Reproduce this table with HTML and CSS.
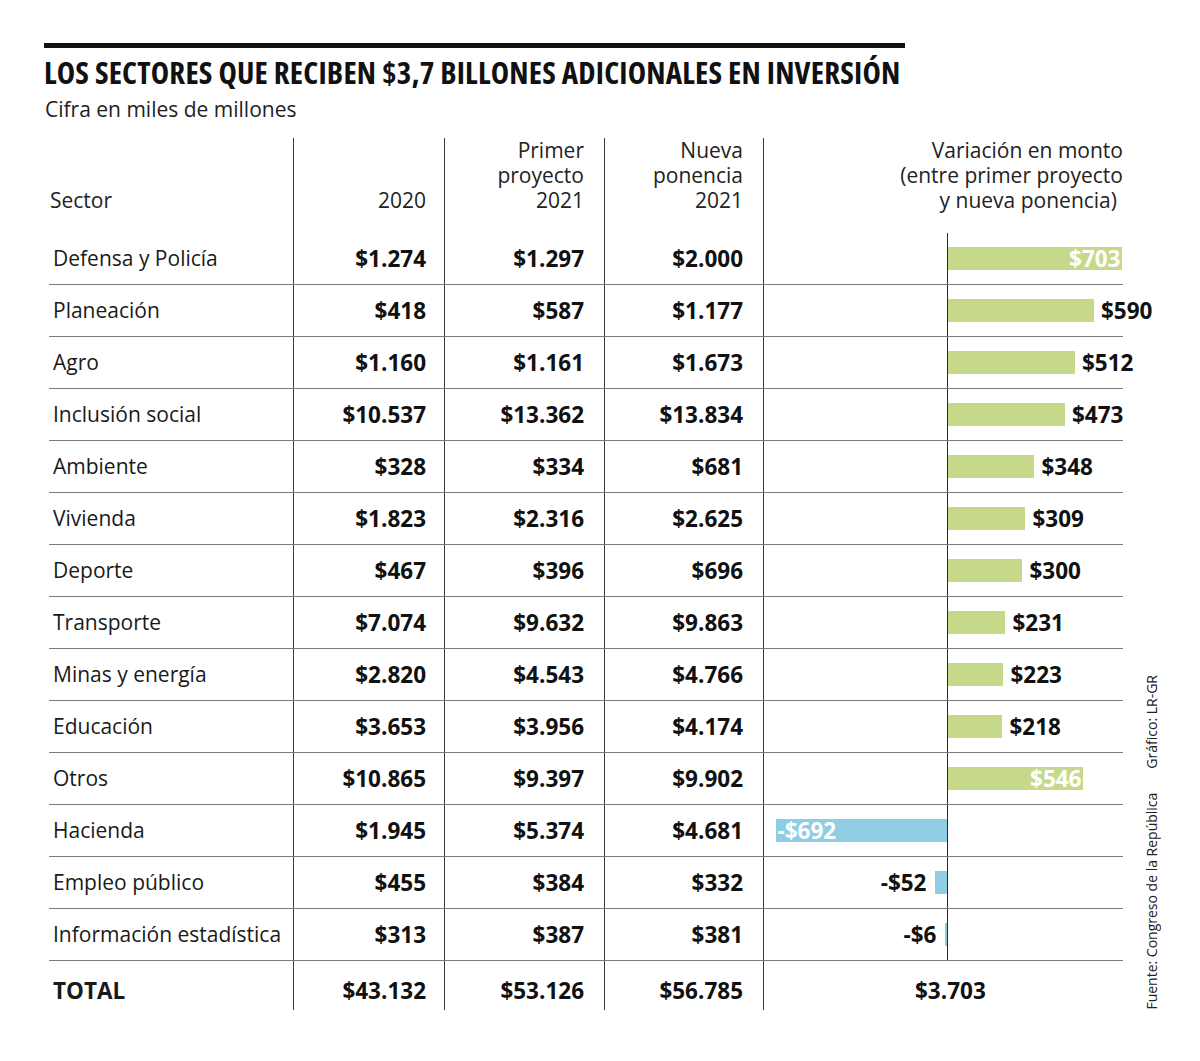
FILE: index.html
```html
<!DOCTYPE html>
<html lang="es">
<head>
<meta charset="utf-8">
<title>Los sectores que reciben $3,7 billones adicionales en inversión</title>
<link rel="stylesheet" href="styles.css">
</head>
<body>
<div class="page">
  <div class="rule"></div>
  <h1 class="title">LOS SECTORES QUE RECIBEN $3,7 BILLONES ADICIONALES EN INVERSIÓN</h1>
  <p class="subtitle">Cifra en miles de millones</p>

  <div class="main">
    <div class="table">
      <div class="row head">
        <div class="cell sector">Sector</div>
        <div class="cell num c2">2020</div>
        <div class="cell num c3">Primer<br>proyecto<br>2021</div>
        <div class="cell num c4">Nueva<br>ponencia<br>2021</div>
        <div class="cell chart-head">Variación en monto<br>(entre primer proyecto<br><span class="last">y nueva ponencia)</span></div>
      </div>

      <div class="row body">
        <div class="cell sector">Defensa y Policía</div>
        <div class="cell num c2">$1.274</div>
        <div class="cell num c3">$1.297</div>
        <div class="cell num c4">$2.000</div>
        <div class="cell chart"><div class="neg"></div><div class="pos"><div class="bar green" style="width:174px"><span class="in">$703</span></div></div></div>
      </div>
      <div class="row body">
        <div class="cell sector">Planeación</div>
        <div class="cell num c2">$418</div>
        <div class="cell num c3">$587</div>
        <div class="cell num c4">$1.177</div>
        <div class="cell chart"><div class="neg"></div><div class="pos"><div class="bar green" style="width:146px"></div><span class="out">$590</span></div></div>
      </div>
      <div class="row body">
        <div class="cell sector">Agro</div>
        <div class="cell num c2">$1.160</div>
        <div class="cell num c3">$1.161</div>
        <div class="cell num c4">$1.673</div>
        <div class="cell chart"><div class="neg"></div><div class="pos"><div class="bar green" style="width:127px"></div><span class="out">$512</span></div></div>
      </div>
      <div class="row body">
        <div class="cell sector">Inclusión social</div>
        <div class="cell num c2">$10.537</div>
        <div class="cell num c3">$13.362</div>
        <div class="cell num c4">$13.834</div>
        <div class="cell chart"><div class="neg"></div><div class="pos"><div class="bar green" style="width:117px"></div><span class="out">$473</span></div></div>
      </div>
      <div class="row body">
        <div class="cell sector">Ambiente</div>
        <div class="cell num c2">$328</div>
        <div class="cell num c3">$334</div>
        <div class="cell num c4">$681</div>
        <div class="cell chart"><div class="neg"></div><div class="pos"><div class="bar green" style="width:86px"></div><span class="out">$348</span></div></div>
      </div>
      <div class="row body">
        <div class="cell sector">Vivienda</div>
        <div class="cell num c2">$1.823</div>
        <div class="cell num c3">$2.316</div>
        <div class="cell num c4">$2.625</div>
        <div class="cell chart"><div class="neg"></div><div class="pos"><div class="bar green" style="width:77px"></div><span class="out">$309</span></div></div>
      </div>
      <div class="row body">
        <div class="cell sector">Deporte</div>
        <div class="cell num c2">$467</div>
        <div class="cell num c3">$396</div>
        <div class="cell num c4">$696</div>
        <div class="cell chart"><div class="neg"></div><div class="pos"><div class="bar green" style="width:74px"></div><span class="out">$300</span></div></div>
      </div>
      <div class="row body">
        <div class="cell sector">Transporte</div>
        <div class="cell num c2">$7.074</div>
        <div class="cell num c3">$9.632</div>
        <div class="cell num c4">$9.863</div>
        <div class="cell chart"><div class="neg"></div><div class="pos"><div class="bar green" style="width:57px"></div><span class="out">$231</span></div></div>
      </div>
      <div class="row body">
        <div class="cell sector">Minas y energía</div>
        <div class="cell num c2">$2.820</div>
        <div class="cell num c3">$4.543</div>
        <div class="cell num c4">$4.766</div>
        <div class="cell chart"><div class="neg"></div><div class="pos"><div class="bar green" style="width:55px"></div><span class="out">$223</span></div></div>
      </div>
      <div class="row body">
        <div class="cell sector">Educación</div>
        <div class="cell num c2">$3.653</div>
        <div class="cell num c3">$3.956</div>
        <div class="cell num c4">$4.174</div>
        <div class="cell chart"><div class="neg"></div><div class="pos"><div class="bar green" style="width:54px"></div><span class="out">$218</span></div></div>
      </div>
      <div class="row body">
        <div class="cell sector">Otros</div>
        <div class="cell num c2">$10.865</div>
        <div class="cell num c3">$9.397</div>
        <div class="cell num c4">$9.902</div>
        <div class="cell chart"><div class="neg"></div><div class="pos"><div class="bar green" style="width:135px"><span class="in">$546</span></div></div></div>
      </div>
      <div class="row body">
        <div class="cell sector">Hacienda</div>
        <div class="cell num c2">$1.945</div>
        <div class="cell num c3">$5.374</div>
        <div class="cell num c4">$4.681</div>
        <div class="cell chart"><div class="neg"><div class="bar blue" style="width:171px"><span class="in-left">-$692</span></div></div><div class="pos"></div></div>
      </div>
      <div class="row body">
        <div class="cell sector">Empleo público</div>
        <div class="cell num c2">$455</div>
        <div class="cell num c3">$384</div>
        <div class="cell num c4">$332</div>
        <div class="cell chart"><div class="neg"><span class="out-neg">-$52</span><div class="bar blue" style="width:12px"></div></div><div class="pos"></div></div>
      </div>
      <div class="row body">
        <div class="cell sector">Información estadística</div>
        <div class="cell num c2">$313</div>
        <div class="cell num c3">$387</div>
        <div class="cell num c4">$381</div>
        <div class="cell chart"><div class="neg"><span class="out-neg">-$6</span><div class="bar blue" style="width:2px"></div></div><div class="pos"></div></div>
      </div>

      <div class="row total">
        <div class="cell sector">TOTAL</div>
        <div class="cell num c2">$43.132</div>
        <div class="cell num c3">$53.126</div>
        <div class="cell num c4">$56.785</div>
        <div class="cell chart-total">$3.703</div>
      </div>
    </div>

    <div class="side">Fuente: Congreso de la República<span class="side-gap"></span>Gráfico: LR-GR</div>
  </div>
</div>
</body>
</html>
```

FILE: styles.css
```css
html, body {
  margin: 0;
  padding: 0;
  background: #ffffff;
}

body {
  font-family: "Open Sans", "Noto Sans", sans-serif;
  color: #111111;
}

.page {
  width: 1200px;
  padding: 43px 0 0 44px;
  box-sizing: border-box;
}

.rule {
  width: 861px;
  height: 5px;
  background: #111111;
}

.title {
  margin: 7px 0 0 0;
  font-size: 31px;
  line-height: 34px;
  font-weight: 700;
  font-stretch: 75%;
  letter-spacing: 0.2px;
  white-space: nowrap;
  color: #111111;
}

.subtitle {
  margin: 7px 0 0 1px;
  font-size: 21px;
  line-height: 26px;
  font-weight: 400;
  color: #222222;
}

.main {
  margin-top: 16px;
  display: flex;
  align-items: flex-end;
}

.table {
  margin-left: 5px;
  width: 1074px;
}

.row {
  display: grid;
  grid-template-columns: 244px 151px 160px 159px 360px;
}

.cell {
  box-sizing: border-box;
  font-size: 21px;
  line-height: 25px;
}

.cell.c2,
.cell.c3,
.cell.c4,
.chart,
.chart-head,
.chart-total {
  border-left: 1px solid #3a3a3a;
}

.num {
  text-align: right;
}
.c2 { padding-right: 18px; }
.c3 { padding-right: 20px; }
.c4 { padding-right: 20px; }

/* header */
.head {
  height: 95px;
}
.head .cell {
  display: flex;
  flex-direction: column;
  justify-content: flex-end;
  padding-bottom: 20px;
  color: #222222;
}
.head .sector {
  padding-left: 1px;
}
.chart-head {
  text-align: right;
}
.chart-head .last {
  padding-right: 6px;
}

/* body rows */
.body {
  height: 52px;
  box-sizing: border-box;
  border-bottom: 1.5px solid #7a7a7a;
}
.body .cell {
  display: flex;
  align-items: center;
}
.body .sector,
.total .sector {
  padding-left: 4px;
  color: #1a1a1a;
}
.body .num,
.total .num {
  justify-content: flex-end;
  font-weight: 700;
  font-size: 22.5px;
  color: #111111;
}

.chart {
  display: flex;
  align-items: stretch !important;
}
.neg {
  width: 184px;
  display: flex;
  align-items: center;
  justify-content: flex-end;
}
.pos {
  width: 175px;
  border-left: 1px solid #2a2a2a;
  display: flex;
  align-items: center;
}

.bar {
  height: 23px;
  display: flex;
  align-items: center;
  flex: none;
}
.green { background: #c6d98b; }
.blue { background: #8ecde4; }

.bar .in,
.bar .in-left,
.out,
.out-neg {
  font-weight: 700;
  font-size: 22.5px;
  line-height: 23px;
  white-space: nowrap;
}
.bar .in {
  color: #ffffff;
  margin-left: auto;
  padding-right: 2px;
}
.bar .in-left {
  color: #ffffff;
  padding-left: 1px;
}
.out {
  margin-left: 7px;
  color: #111111;
}
.out-neg {
  margin-right: 9px;
  color: #111111;
}

/* total row */
.total {
  height: 49px;
}
.total .cell {
  display: flex;
  align-items: center;
  padding-top: 9px;
}
.total .sector {
  font-weight: 700;
  font-size: 22.5px;
}
.chart-total {
  padding-left: 151px;
  font-weight: 700;
  font-size: 22.5px;
  color: #111111;
}

/* side credits */
.side {
  margin-left: 19px;
  margin-bottom: 0;
  writing-mode: vertical-rl;
  transform: rotate(180deg);
  font-size: 14px;
  line-height: 20px;
  color: #222222;
  white-space: nowrap;
}
.side-gap {
  display: inline-block;
  height: 24px;
}
```
